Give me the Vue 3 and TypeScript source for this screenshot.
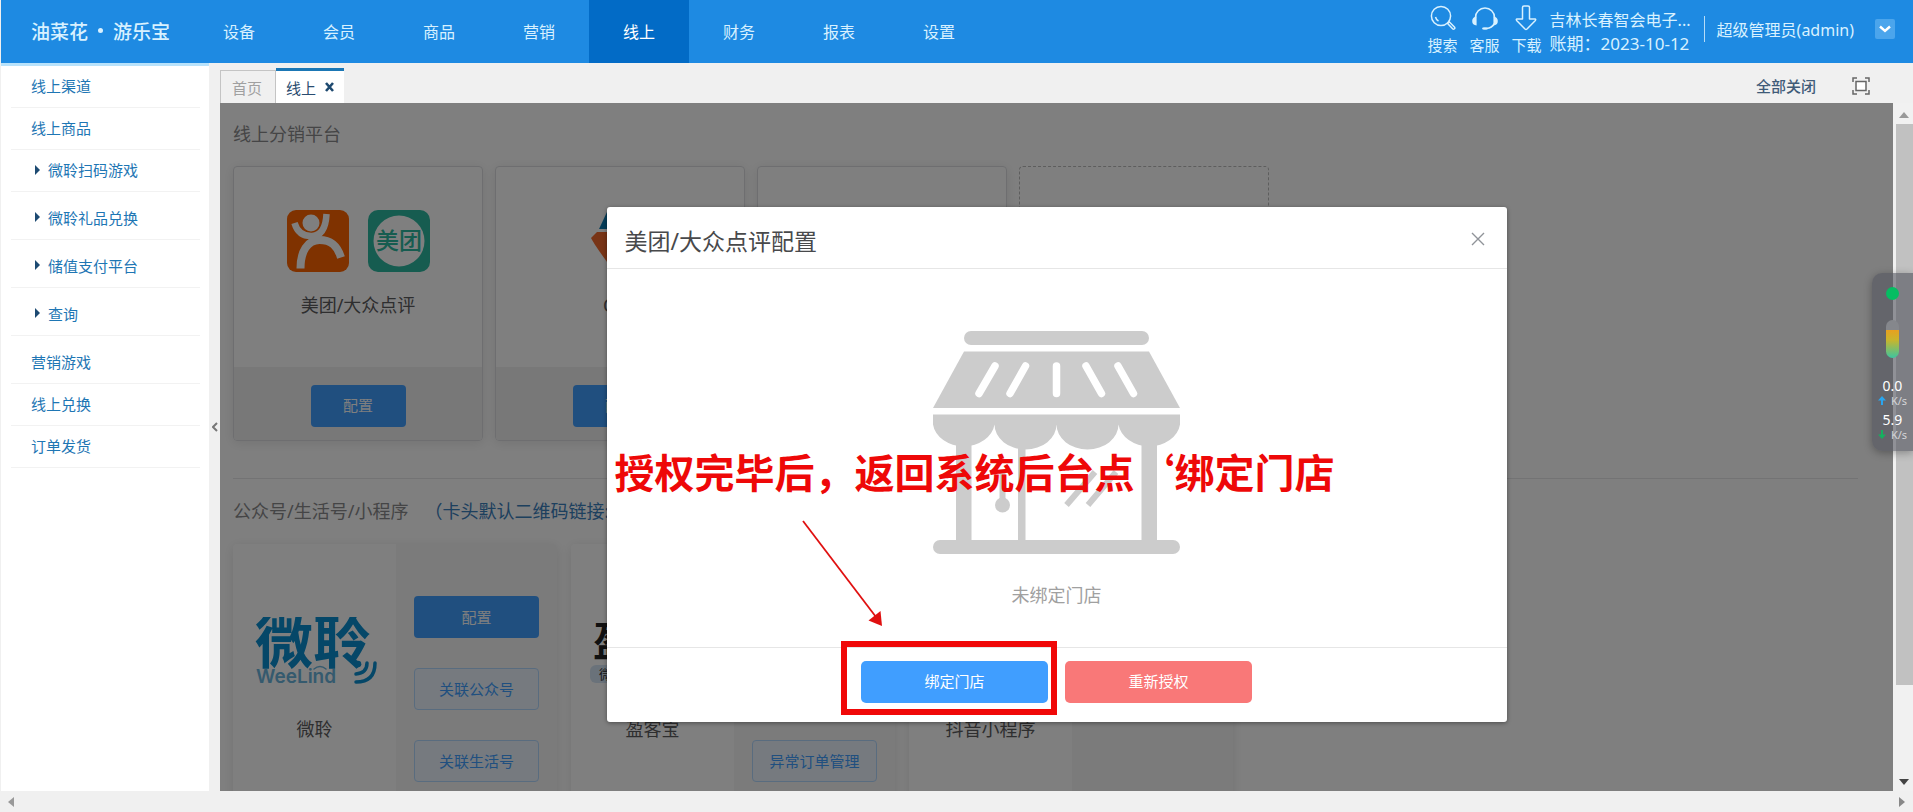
<script setup lang="ts">
import { ref } from 'vue'

interface SideItem { label: string; group?: boolean; tall?: boolean }

const navItems: string[] = ['设备', '会员', '商品', '营销', '线上', '财务', '报表', '设置']
const activeNav = ref('线上')

const sideItems: SideItem[] = [
  { label: '线上渠道' },
  { label: '线上商品' },
  { label: '微聆扫码游戏', group: true },
  { label: '微聆礼品兑换', group: true, tall: true },
  { label: '储值支付平台', group: true, tall: true },
  { label: '查询', group: true, tall: true },
  { label: '营销游戏', tall: true },
  { label: '线上兑换' },
  { label: '订单发货' },
]
</script>

<template>
  <div class="app">
    <header class="top">
      <h1 class="brand"><span>油菜花</span><i class="brand-dot"></i><span>游乐宝</span></h1>
      <nav class="nav">
        <a v-for="n in navItems" :key="n" href="#" :class="{ on: n === activeNav }" @click.prevent="activeNav = n">{{ n }}</a>
      </nav>
      <div class="tools">
        <button class="tool" type="button">
          <svg width="26" height="26" viewBox="0 0 26 26" fill="none" stroke="currentColor" stroke-width="1.5">
            <circle cx="11" cy="11" r="9.6" />
            <path d="M5.5 12a6 6 0 0 0 3 4" />
            <path d="M17.6 18.4l1.6-1.6 5.2 5.2a1.2 1.2 0 0 1-1.8 1.8z" />
          </svg>
          搜索
        </button>
        <button class="tool" type="button">
          <svg width="26" height="26" viewBox="0 0 26 26" fill="none" stroke="currentColor" stroke-width="1.6">
            <path d="M3.5 12.5a9.5 9.5 0 0 1 19 0M22.5 18.5q-2.5 4.5-8 5" />
            <path d="M3.8 12.5v7q-2.8-.5-2.8-3.500t2.800-3.500zM22.200 12.500v7q2.800-.5 2.800-3.500t-2.800-3.500z" fill="currentColor" />
            <ellipse cx="13" cy="23.500" rx="3" ry="1.200" fill="currentColor" stroke="none" />
          </svg>
          客服
        </button>
        <button class="tool" type="button">
          <svg width="26" height="26" viewBox="0 0 26 26" fill="none" stroke="currentColor" stroke-width="1.5" stroke-linejoin="round">
            <path d="M8.500 2.500q0-1.500 1.500-1.500h4q1.500 0 1.500 1.500v11.500h5.500q1.200.2.400 1.400l-8.400 8.600q-1 .8-2 0l-8.400-8.600q-.8-1.200.4-1.400h5.500z" />
          </svg>
          下载
        </button>
      </div>
      <div class="company">
        <span>吉林长春智会电子...</span>
        <span class="period">账期：2023-10-12</span>
      </div>
      <div class="account">
        <span>超级管理员(admin)</span>
        <button class="caret" type="button" aria-label="账户菜单">
          <svg width="12" height="8" viewBox="0 0 12 8" fill="none" stroke="#fff" stroke-width="2.4"><path d="M1 1.500l5 4.500 5-4.500" /></svg>
        </button>
      </div>
    </header>

    <div class="body">
      <aside class="side">
        <a v-for="s in sideItems" :key="s.label" href="#" :class="{ tall: s.tall, group: s.group }" @click.prevent>
          <svg v-if="s.group" width="5" height="10" viewBox="0 0 5 10"><path d="M0 0l5 5-5 5z" fill="#1d4a72" /></svg>{{ s.label }}
        </a>
      </aside>
      <button class="fold" type="button" aria-label="收起菜单">
        <svg width="6" height="10" viewBox="0 0 6 10" fill="none" stroke="#777" stroke-width="2"><path d="M5 1l-4 4 4 4" /></svg>
      </button>

      <main class="main">
        <div class="tabs">
          <button class="tab" type="button">首页</button>
          <div class="tab current">
            <span>线上</span>
            <button class="tab-x" type="button" aria-label="关闭线上">
              <svg width="9" height="10" viewBox="0 0 9 10" stroke="#1f4a70" stroke-width="2.600"><path d="M1 1l7 8M8 1l-7 8" /></svg>
            </button>
          </div>
          <button class="close-all" type="button">全部关闭</button>
          <button class="full" type="button" aria-label="全屏">
            <svg width="18" height="18" viewBox="0 0 18 18" fill="none" stroke="#666" stroke-width="1.5">
              <path d="M1 5v-4h4M13 1h4v4M17 13v4h-4M5 17h-4v-4" />
              <rect x="4" y="4.500" width="10" height="9" fill="#fff" />
            </svg>
          </button>
        </div>

        <div class="view">
          <div class="page">
            <div class="content">
              <h2>线上分销平台</h2>
              <div class="row platforms">
                <section class="card">
                  <div class="card-body">
                    <div class="logos">
                      <svg width="62" height="62" viewBox="0 0 62 62">
                        <rect width="62" height="62" rx="9" fill="#ff6400" />
                        <g fill="none" stroke="#fff">
                          <circle cx="24" cy="13" r="8.500" fill="#fff" stroke="none" />
                          <path d="M7.500 13q4 13.500 17.500 13t14.500-22" stroke-width="6.500" />
                          <path d="M13.500 58.500c0-17 7-28.500 19-28.500s18 6 21.500 17.500" stroke-width="8" />
                        </g>
                      </svg>
                      <svg width="62" height="62" viewBox="0 0 62 62">
                        <rect width="62" height="62" rx="10" fill="#2cb8a0" />
                        <circle cx="31" cy="31" r="25.500" fill="#fff" />
                        <text x="31" y="39" text-anchor="middle" class="mt">美团</text>
                      </svg>
                    </div>
                    <p>美团/大众点评</p>
                  </div>
                  <div class="card-foot"><button class="btn primary" type="button">配置</button></div>
                </section>
                <section class="card">
                  <div class="card-body">
                    <div class="logos">
                      <svg width="62" height="62" viewBox="0 0 62 62">
                        <path d="M18 2h26l8 17h-42z" fill="#0a7bb0" />
                        <path d="M8 22h16l14 38h-14q-18-24-22-32z" fill="#f0682c" />
                      </svg>
                    </div>
                    <p>OTA</p>
                  </div>
                  <div class="card-foot"><button class="btn primary" type="button">配置</button></div>
                </section>
                <section class="card"></section>
                <section class="card dashed"></section>
              </div>

              <div class="sub">
                <h2>公众号/生活号/小程序</h2>
                <a href="#" @click.prevent>（卡头默认二维码链接:</a>
              </div>
              <div class="row accounts">
                <section class="acct">
                  <div class="who">
                    <svg width="126" height="68" viewBox="0 0 126 68">
                      <text x="3" y="46" class="wl">微聆</text>
                      <text x="4" y="66" class="we">WeeLind</text>
                      <g fill="none" stroke="#0a8fd0" stroke-width="3.500" stroke-linecap="round">
                        <circle cx="106" cy="47" r="1.500" />
                        <path d="M115 46q0 10-11 11M123 46q0 19-19 19" />
                        <path d="M62 52q6-5 12 0" stroke="#6ab4dc" stroke-width="1.500" />
                      </g>
                    </svg>
                    <p>微聆</p>
                  </div>
                  <div class="acts">
                    <button class="btn primary" type="button">配置</button>
                    <button class="btn plain" type="button">关联公众号</button>
                    <button class="btn plain" type="button">关联生活号</button>
                  </div>
                </section>
                <section class="acct">
                  <div class="who">
                    <svg width="126" height="68" viewBox="0 0 126 68">
                      <text x="3" y="39" class="yk">盈客宝</text>
                      <rect x="0" y="48" width="126" height="18" rx="6" fill="#d5e5f5" />
                      <text x="9" y="62" class="yks">微聆</text>
                    </svg>
                    <p>盈客宝</p>
                  </div>
                  <div class="acts end"><button class="btn plain" type="button">异常订单管理</button></div>
                </section>
                <section class="acct">
                  <div class="who"><p>抖音小程序</p></div>
                  <div class="acts"></div>
                </section>
              </div>
            </div>

            <div class="mask">
              <div class="dialog" role="dialog" aria-labelledby="dlg-title">
                <div class="dlg-head">
                  <h3 id="dlg-title">美团/大众点评配置</h3>
                  <button type="button" class="dlg-x" aria-label="关闭">
                    <svg width="14" height="14" viewBox="0 0 14 14" stroke="#909399" stroke-width="1.4"><path d="M1 1l12 12M13 1l-12 12" /></svg>
                  </button>
                </div>
                <div class="dlg-body">
                  <svg width="247" height="223" viewBox="0 0 247 223" fill="#ccc">
                    <rect x="31" y="0" width="185" height="14" rx="7" />
                    <path d="M31 20.500h185l31 56.500h-247z" />
                    <g stroke="#fff" stroke-width="7.500" stroke-linecap="round">
                      <path d="M62 35L46 62.500M92.500 35L77 62.500M123.500 35v27.500M153 35l15.500 27.500M185 35l15.500 27.500" />
                    </g>
                    <path d="M0 83.500h247v10a31 25 0 0 1-61.500 0a31 25 0 0 1-62 0a31 25 0 0 1-62 0a31 25 0 0 1-61.500 0z" />
                    <path d="M23 112h15.500v100h-15.500zM85 112h7.500v100h-7.500zM208.500 112h15.500v100h-15.500zM66.500 140h6v30h-6z" />
                    <circle cx="69.500" cy="174" r="7.500" />
                    <path d="M133.500 174L162 141M155 174L183 141" stroke="#ccc" stroke-width="6" />
                    <rect x="0" y="209" width="247" height="14" rx="7" />
                  </svg>
                  <p>未绑定门店</p>
                </div>
                <div class="dlg-foot">
                  <div class="marked"><button class="btn bind" type="button">绑定门店</button></div>
                  <button class="btn reauth" type="button">重新授权</button>
                </div>
                <strong class="hint" lang="zh-CN">授权完毕后，返回系统后台点‘绑定门店</strong>
                <svg class="arrow" width="82" height="108" viewBox="0 0 82 108">
                  <path d="M1 2L74 98" stroke="#e01010" stroke-width="1.800" />
                  <path d="M80 107l-13.500-5.500 12-9.500z" fill="#e01010" />
                </svg>
              </div>
            </div>
          </div>
          <div class="vbar">
            <svg width="10" height="6" viewBox="0 0 10 6"><path d="M0 6l5-6 5 6z" fill="#999" /></svg>
            <i></i>
            <svg width="10" height="6" viewBox="0 0 10 6"><path d="M0 0l5 6 5-6z" fill="#444" /></svg>
          </div>
        </div>
      </main>
    </div>

    <footer class="hbar">
      <svg width="6" height="10" viewBox="0 0 6 10"><path d="M6 0l-6 5 6 5z" fill="#999" /></svg>
      <svg width="6" height="10" viewBox="0 0 6 10"><path d="M0 0l6 5-6 5z" fill="#888" /></svg>
    </footer>

    <div class="meter">
      <i class="dot"></i>
      <i class="cell"></i>
      <div class="rate">
        <b>0.0</b>
        <span><svg width="8" height="9" viewBox="0 0 8 9"><path d="M4 0l4 4.500h-3v4.500h-2v-4.500h-3z" fill="#2aa5ee" /></svg>K/s</span>
        <b>5.9</b>
        <span><svg width="8" height="9" viewBox="0 0 8 9"><path d="M4 9l4-4.500h-3v-4.500h-2v4.500h-3z" fill="#16b060" /></svg>K/s</span>
      </div>
    </div>
  </div>
</template>

<style>
body { margin: 0; }
</style>

<style scoped>
* { box-sizing: border-box; }
h1, h2, h3, p { margin: 0; font-weight: 400; }
button { font: inherit; border: 0; padding: 0; background: none; color: inherit; cursor: pointer; }
a { text-decoration: none; color: inherit; }
svg { display: block; flex: none; }
.app {
  position: relative;
  display: flex;
  flex-direction: column;
  height: 100vh;
  overflow: hidden;
  background: #f0f0f0;
  font-family: "Noto Sans", "Noto Sans CJK SC", sans-serif;
  font-size: 15px;
}

.top { display: flex; height: 63px; flex: none; margin-left: 1px; background: #1e8ae2; color: #d8f1ff; font-size: 16px; }
.brand { display: flex; align-items: center; width: 188px; padding: 0 0 2px 30px; font-size: 19px; font-weight: 500; }
.brand-dot { width: 5px; height: 5px; border-radius: 50%; background: currentColor; margin: 0 10px; }
.nav { display: flex; flex: 1; }
.nav a { width: 100px; display: flex; align-items: center; justify-content: center; padding-bottom: 2px; }
.nav a.on { background: #026bc6; color: #fff; }
.tools { display: flex; gap: 12px; padding-top: 5px; }
.tool { display: flex; flex-direction: column; align-items: flex-start; width: 30px; gap: 3px; font-size: 15px; line-height: 22px; white-space: nowrap; }
.tool svg { align-self: center; }
.company { display: flex; flex-direction: column; justify-content: center; width: 162px; padding-left: 8px; line-height: 23px; white-space: nowrap; }
.period { font-size: 17px; }
.account { display: flex; align-items: center; gap: 17px; padding-right: 18px; white-space: nowrap; height: 58px; }
.account span { margin-right: 4px; }
.account::before { content: ""; width: 1px; height: 26px; background: #b5dcf8; margin-right: -5px; }
.caret { display: flex; align-items: center; justify-content: center; width: 20px; height: 20px; background: #4ba5ec; border-radius: 2px; }

.body { display: flex; flex: 1; min-height: 0; }
.side { width: 208px; margin-left: 1px; flex: none; background: #fff; border-top: 3px solid #b8e2fb; padding: 0 9px 0 10px; color: #1e76b4; }
.side a { display: flex; align-items: center; height: 42px; padding: 0 0 2px 20px; border-bottom: 1px solid #f2f2f2; }
.side a.tall { height: 48px; padding-top: 5px; }
.side a.group { padding-left: 24px; gap: 8px; }
.fold { display: flex; align-items: center; justify-content: center; width: 11px; flex: none; }
.main { display: flex; flex-direction: column; flex: 1; min-width: 0; }
.tabs { display: flex; align-items: flex-end; height: 40px; flex: none; }
.tab { display: flex; align-items: center; justify-content: center; width: 56px; height: 33px; padding-right: 2px; border: 1px solid #c4c4c4; border-bottom: 0; color: #a0a0a0; }
.tab.current { width: 68px; height: 35px; gap: 9px; padding: 0; border: 0; border-top: 3px solid #1b77b5; background: #fff; color: #2a4c70; }
.close-all { margin-left: auto; height: 36px; font-weight: 500; color: #3f5b78; }
.full { margin: 0 43px 8px 36px; }

.view { display: flex; flex: 1; min-height: 0; }
.page { position: relative; flex: 1; min-width: 0; overflow: hidden; background: #fff; }
.content { padding: 16px 35px 0 13px; }
h2 { font-size: 18px; line-height: 30px; color: #8a8a8c; white-space: nowrap; }
.row { display: flex; }
.platforms { gap: 12px; margin-top: 17px; padding-bottom: 37px; border-bottom: 1px solid #e6e6e8; }
.card { width: 250px; height: 275px; border: 1px solid #dcdde0; border-radius: 4px; box-shadow: 0 2px 12px rgba(0, 0, 0, .1); overflow: hidden; }
.card.dashed { border-style: dashed; border-color: #bbb; box-shadow: none; }
.card-body { height: 200px; padding-top: 43px; text-align: center; font-size: 18px; line-height: 26px; color: #5c5c5e; }
.logos { display: flex; justify-content: center; gap: 19px; margin-bottom: 20px; }
.mt { font: 500 23px "Noto Sans CJK SC", sans-serif; fill: #2cb8a0; }
.card-foot { display: flex; align-items: center; justify-content: center; height: 73px; padding-top: 4px; background: #f0f0f1; }
.card-foot .btn { width: 95px; }
.btn { height: 42px; padding-bottom: 2px; border-radius: 4px; font-size: 15px; white-space: nowrap; }
.primary { background: #409eff; color: #fff; }
.plain { background: #ecf5ff; border: 1px solid #b3d8ff; color: #409eff; }
.sub { display: flex; align-items: center; gap: 16px; margin-top: 17px; font-size: 18px; line-height: 30px; color: #3a80bd; white-space: nowrap; }
.accounts { gap: 14px; margin-top: 18px; }
.acct { display: flex; width: 324px; height: 275px; border-radius: 4px; box-shadow: 0 2px 12px rgba(0, 0, 0, .1); overflow: hidden; }
.who { display: flex; flex-direction: column; justify-content: flex-end; align-items: center; width: 163px; height: 198px; gap: 31px; font-size: 18px; line-height: 26px; color: #5c5c5e; }
.acts { display: flex; flex-direction: column; align-items: center; gap: 30px; flex: 1; padding-top: 52px; background: #f6f6f7; }
.acts.end { padding-top: 196px; }
.acts .btn { width: 125px; }
.wl { font: 700 58px "Noto Sans CJK SC", sans-serif; fill: #0a8fd0; }
.we { font: 600 19px Inter, sans-serif; fill: #6ab4dc; }
.yk { font: 700 40px "Noto Sans CJK SC", sans-serif; fill: #222; }
.yks { font: 400 13px "Noto Sans CJK SC", sans-serif; fill: #333; }

.mask { position: absolute; inset: 0; display: flex; align-items: flex-start; justify-content: center; padding-top: 104px; background: rgba(0, 0, 0, .5); }
.dialog { position: relative; width: 900px; background: #fff; border-radius: 3px; box-shadow: 0 1px 4px rgba(0, 0, 0, .4); }
.dlg-head { display: flex; align-items: center; justify-content: space-between; height: 62px; padding: 6px 22px 0 18px; border-bottom: 1px solid #e6e6e6; }
.dlg-head h3 { font-size: 23px; line-height: 32px; color: #48494b; }
.dlg-x { margin-bottom: 4px; }
.dlg-body { display: flex; flex-direction: column; align-items: center; height: 378px; padding-top: 62px; gap: 28px; font-size: 18px; line-height: 26px; color: #a0a0a0; }
.dlg-foot { display: flex; justify-content: center; gap: 17px; padding: 13px 0 19px; border-top: 1px solid #e6e6e6; }
.dlg-foot .btn { width: 187px; padding-bottom: 4px; border-radius: 5px; color: #fff; }
.bind { background: #409eff; }
.reauth { background: #f97878; }
.marked { position: relative; }
.marked::after { content: ""; position: absolute; inset: -20px -9px -12px -20px; border: 6px solid #f00808; pointer-events: none; }
.hint { position: absolute; left: 8px; top: 239px; font: 700 40px/50px "Noto Sans CJK SC", sans-serif; color: #ee0808; white-space: nowrap; }
.arrow { position: absolute; left: 195px; top: 312px; }

.vbar { display: flex; flex-direction: column; align-items: center; width: 20px; flex: none; padding: 9px 0 6px 2px; background: #f1f1f1; }
.vbar i { width: 17px; height: 561px; margin: 6px 0 auto; background: #c1c1c1; }
.hbar { display: flex; align-items: center; justify-content: space-between; height: 21px; flex: none; padding: 0 8px; background: #f0f0f0; }

.meter { position: absolute; right: 0; top: 273px; display: flex; flex-direction: column; align-items: center; width: 41px; height: 178px; padding-top: 14px; border-radius: 10px 0 0 10px; background: rgba(84, 86, 96, .62); box-shadow: 0 2px 8px rgba(0, 0, 0, .3); color: #fff; }
.dot { width: 13px; height: 13px; border-radius: 50%; background: #06bd62; }
.cell { width: 13px; height: 38px; margin: 20px 0 19px; border-radius: 7px; background: linear-gradient(#85878c 0 10px, #e8a020 10px, #c9b52c 20px, #3cc5a0); }
.rate { text-align: center; }
.rate b { display: block; font-weight: 400; font-size: 14px; line-height: 18px; }
.rate span { display: flex; align-items: center; gap: 5px; font-size: 11px; line-height: 11px; padding-bottom: 5px; color: #d5d5d8; }
</style>
